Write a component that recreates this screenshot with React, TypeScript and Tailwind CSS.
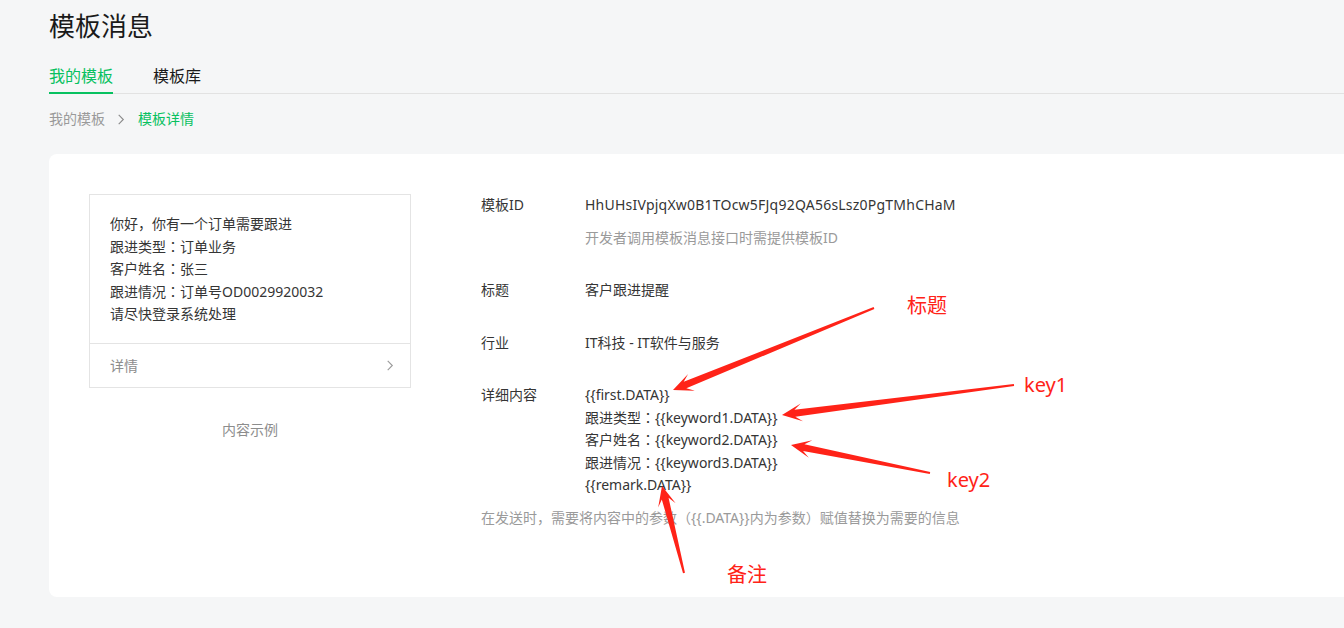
import React from 'react'

type Pt = [number, number]

// tapered red annotation arrow, like the ones screenshot tools draw
function arrowPoints(tail: Pt, tip: Pt) {
  const dx = tip[0] - tail[0]
  const dy = tip[1] - tail[1]
  const len = Math.hypot(dx, dy)
  const ux = dx / len
  const uy = dy / len
  const nx = -uy
  const ny = ux
  const neck: Pt = [tip[0] - ux * 13, tip[1] - uy * 13]
  const wing: Pt = [tip[0] - ux * 20, tip[1] - uy * 20]
  const p = (b: Pt, w: number): string => `${b[0] + nx * w},${b[1] + ny * w}`
  return [p(tail, 1), p(neck, 3.5), p(wing, 9), `${tip[0]},${tip[1]}`, p(wing, -9), p(neck, -3.5), p(tail, -1)].join(' ')
}

const arrows: [Pt, Pt][] = [
  [[874, 308], [673, 390]],
  [[1014, 385], [782, 415]],
  [[930, 473], [791, 445]],
  [[684, 573], [662, 486]],
]

const notes = [
  { text: '标题', cls: 'left-[907px] top-[293px]' },
  { text: 'key1', cls: 'left-[1024px] top-[372px]' },
  { text: 'key2', cls: 'left-[947px] top-[467px]' },
  { text: '备注', cls: 'left-[727px] top-[562px]' },
]

const preview = ['你好，你有一个订单需要跟进', '跟进类型：订单业务', '客户姓名：张三', '跟进情况：订单号OD0029920032', '请尽快登录系统处理']

const content = [
  '{{first.DATA}}',
  '跟进类型：{{keyword1.DATA}}',
  '客户姓名：{{keyword2.DATA}}',
  '跟进情况：{{keyword3.DATA}}',
  '{{remark.DATA}}',
]

// the full-width colon sits centred in the original font; the JP face does that too
function Line({ text }: { text: string }) {
  const parts = text.split('：')
  return (
    <div className="h-[22.5px] whitespace-nowrap">
      {parts.map((p, i) => (
        <React.Fragment key={i}>
          {i > 0 && <span className="font-['Noto_Sans_CJK_JP',sans-serif] leading-none">：</span>}
          {p}
        </React.Fragment>
      ))}
    </div>
  )
}

function Chevron({ className }: { className?: string }) {
  return (
    <svg className={className} viewBox="0 0 8 12" fill="none" stroke="currentColor" strokeWidth="1.2">
      <polyline points="1.5,1 6.5,6 1.5,11" />
    </svg>
  )
}

export default function App() {
  return (
    <div className="relative min-h-screen h-[628px] overflow-hidden bg-[#f5f6f7] pl-[49px] font-['Noto_Sans','Noto_Sans_CJK_SC',sans-serif] text-[14px] text-[#353535]">
      <h1 className="pt-[8px] text-[26px] leading-[36px] text-[#1a1a1a]">模板消息</h1>

      {/* Tabs */}
      <div className="mt-[20px] flex gap-10 border-b border-[#e2e2e2] text-[16px] leading-[24px]">
        <div className="-mb-px border-b-2 border-[#07c160] pb-[4px] text-[#07c160]">我的模板</div>
        <div className="pb-[4px] text-[#1a1a1a]">模板库</div>
      </div>

      {/* Breadcrumb */}
      <div className="mt-[14px] flex items-center leading-[22px]">
        <span className="text-[#9a9a9a]">我的模板</span>
        <Chevron className="ml-[12px] mr-[13px] h-[11px] w-[8px] text-[#8a8a8a]" />
        <span className="text-[#07c160]">模板详情</span>
      </div>

      {/* Card */}
      <div className="mt-[24px] flex h-[443px] rounded-l-[8px] bg-white pl-10 pt-10">
        <div className="w-[322px] shrink-0">
          <div className="border border-[#e4e4e4]">
            <div className="px-5 pb-[17px] pt-[18px] leading-[22.5px]">
              {preview.map((l) => (
                <Line key={l} text={l} />
              ))}
            </div>
            <div className="flex h-[44px] items-center justify-between border-t border-[#e4e4e4] pl-5 pr-4 text-[#8d8d8d]">
              <span>详情</span>
              <Chevron className="h-[11px] w-[8px] text-[#9a9a9a]" />
            </div>
          </div>
          <div className="mt-[31px] text-center leading-[22px] text-[#8d8d8d]">内容示例</div>
        </div>

        <div className="ml-[70px] leading-[22px]">
          <div className="flex">
            <div className="w-[104px] shrink-0">模板ID</div>
            <div>
              <div className="tracking-[0.22px]">HhUHsIVpjqXw0B1TOcw5FJq92QA56sLsz0PgTMhCHaM</div>
              <div className="mt-[11px] text-[#9a9a9a]">开发者调用模板消息接口时需提供模板ID</div>
            </div>
          </div>
          <div className="mt-[30px] flex">
            <div className="w-[104px] shrink-0">标题</div>
            <div>客户跟进提醒</div>
          </div>
          <div className="mt-[31px] flex">
            <div className="w-[104px] shrink-0">行业</div>
            <div>IT科技 - IT软件与服务</div>
          </div>
          <div className="mt-[30px] flex">
            <div className="w-[104px] shrink-0">详细内容</div>
            <div className="leading-[22.5px]">
              {content.map((l) => (
                <Line key={l} text={l} />
              ))}
            </div>
          </div>
          <div className="mt-[10px] text-[#9a9a9a]">在发送时，需要将内容中的参数（{'{{.DATA}}'}内为参数）赋值替换为需要的信息</div>
        </div>
      </div>

      {/* Red annotations drawn over the screenshot */}
      <svg className="pointer-events-none absolute left-0 top-0" width="1344" height="628">
        {arrows.map(([a, b], i) => (
          <polygon key={i} points={arrowPoints(a, b)} fill="#ff2318" />
        ))}
      </svg>
      {notes.map((n) => (
        <div
          key={n.text}
          className={`pointer-events-none absolute text-[20px] leading-[26px] text-[#ff2318] ${n.cls}`}
        >
          {n.text}
        </div>
      ))}
    </div>
  )
}
